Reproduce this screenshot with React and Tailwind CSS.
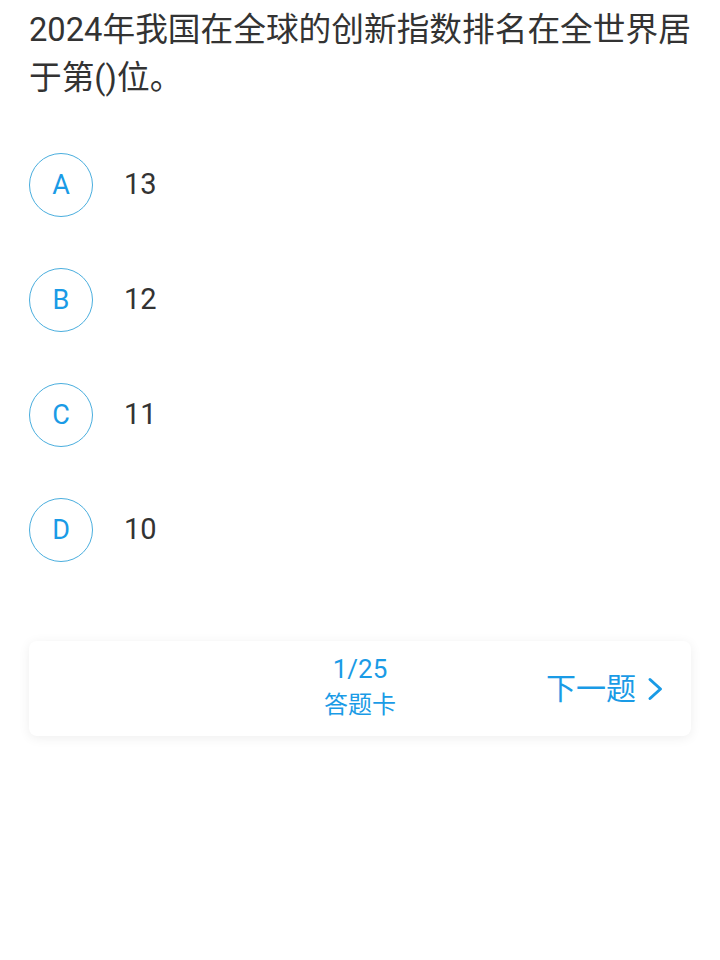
import React from "react";

const options = [
  { key: "A", text: "13" },
  { key: "B", text: "12" },
  { key: "C", text: "11" },
  { key: "D", text: "10" },
];

const App = () => {
  return (
    <div
      className="min-h-screen w-[720px] bg-white"
      style={{ fontFamily: "Roboto, 'Noto Sans CJK SC', sans-serif" }}
    >
      <div className="pl-[29px] pr-[20px] pt-[6px]">
        <p className="text-[32.7px] leading-[48px] text-[#333333]">
          2024年我国在全球的创新指数排名在全世界居于第()位。
        </p>
      </div>

      <div className="mt-[51px] flex flex-col gap-[51px] pl-[29px]">
        {options.map((o) => (
          <div key={o.key} className="flex items-center">
            <div className="flex h-[64px] w-[64px] items-center justify-center rounded-full border border-[#4aaede] text-[27px] text-[#1a9be6]">
              {o.key}
            </div>
            <span className="ml-[31px] text-[29px] text-[#333333]">{o.text}</span>
          </div>
        ))}
      </div>

      <div className="mx-[29px] mt-[79px] grid h-[95px] grid-cols-3 items-center rounded-[8px] bg-white shadow-[0_2px_12px_rgba(0,0,0,0.07)]">
        <div />
        <div className="mb-[4px] flex flex-col items-center text-[#1a9be6]">
          <span className="text-[26px] leading-[36px]">1/25</span>
          <span className="text-[24px] leading-[36px]">答题卡</span>
        </div>
        <div className="flex justify-end pr-[28px]">
          <div className="flex items-center gap-[11px] text-[30px] text-[#1a9be6]">
            <span>下一题</span>
            <svg width="16" height="24" viewBox="0 0 16 24" fill="none">
              <path d="M3 2.5 L13.5 12 L3 21.5" stroke="#1a9be6" strokeWidth="3" strokeLinecap="round" strokeLinejoin="round" />
            </svg>
          </div>
        </div>
      </div>
    </div>
  );
};

export default App;
